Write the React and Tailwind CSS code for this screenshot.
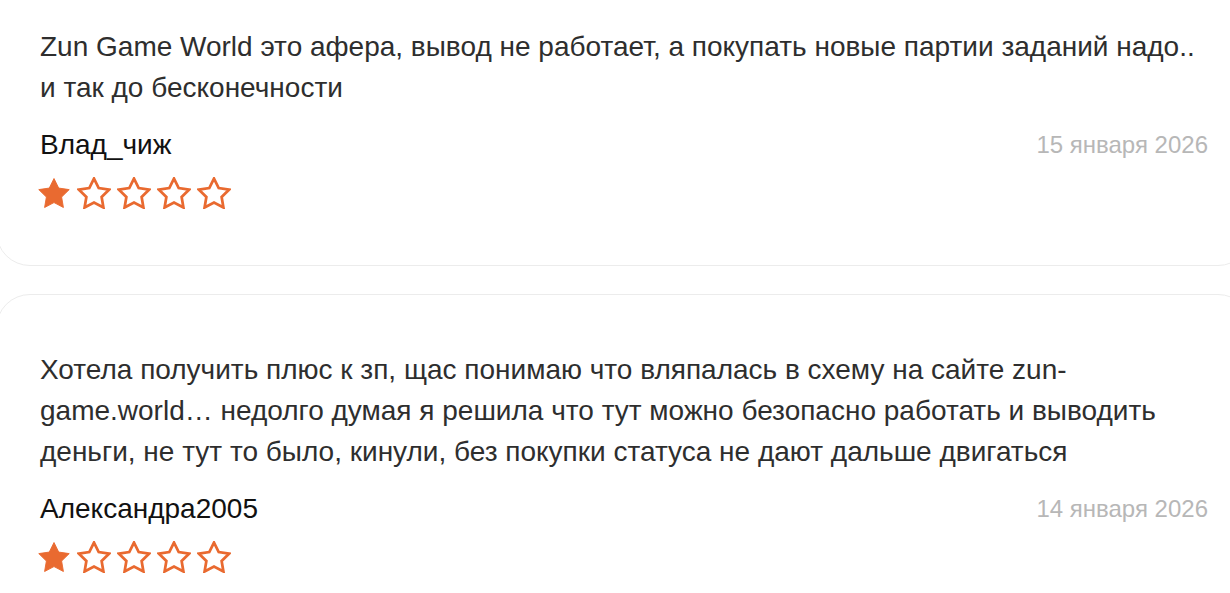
import React from "react";

const reviews = [
  {
    text: "Zun Game World это афера, вывод не работает, а покупать новые партии заданий надо.. и так до бесконечности",
    author: "Влад_чиж",
    date: "15 января 2026",
    rating: 1,
  },
  {
    text: "Хотела получить плюс к зп, щас понимаю что вляпалась в схему на сайте zun-game.world… недолго думая я решила что тут можно безопасно работать и выводить деньги, не тут то было, кинули, без покупки статуса не дают дальше двигаться",
    author: "Александра2005",
    date: "14 января 2026",
    rating: 1,
  },
];

function Star({ filled }) {
  return (
    <svg width="34" height="32" viewBox="-1 -1 22 21" className="shrink-0">
      <polygon
        points="10,0 13.09,6.26 20,7.27 15,12.14 16.18,19.02 10,15.77 3.82,19.02 5,12.14 0,7.27 6.91,6.26"
        fill={filled ? "#e96a30" : "none"}
        stroke="#e96a30"
        strokeWidth={filled ? 0.6 : 1.8}
        strokeLinejoin="miter"
      />
    </svg>
  );
}

function ReviewCard({ review }) {
  return (
    <div className="rounded-[34px] border border-[#ececec] bg-white pt-[54px] pb-[56px] pl-[43px] pr-[43px]">
      {/* Review text */}
      <p className="text-[28px] leading-[41px] text-[#2e2e2e]">{review.text}</p>

      {/* Author and date */}
      <div className="mt-[21px] flex items-center justify-between leading-[32px]">
        <span className="text-[28px] text-[#111111]">{review.author}</span>
        <span className="text-[24px] text-[#b7b7b7]">{review.date}</span>
      </div>

      {/* Rating */}
      <div className="-ml-[3px] mt-[16px] flex items-center gap-[6px]">
        {[1, 2, 3, 4, 5].map((n) => (
          <Star key={n} filled={n <= review.rating} />
        ))}
      </div>
    </div>
  );
}

export default function App() {
  return (
    <div
      className="h-[593px] w-[1230px] overflow-hidden bg-white"
      style={{ fontFamily: '"Liberation Sans", Arial, sans-serif' }}
    >
      <div className="-mt-[29px] -ml-[4px] flex w-[1256px] flex-col gap-[28px]">
        {reviews.map((r, i) => (
          <ReviewCard key={i} review={r} />
        ))}
      </div>
    </div>
  );
}
